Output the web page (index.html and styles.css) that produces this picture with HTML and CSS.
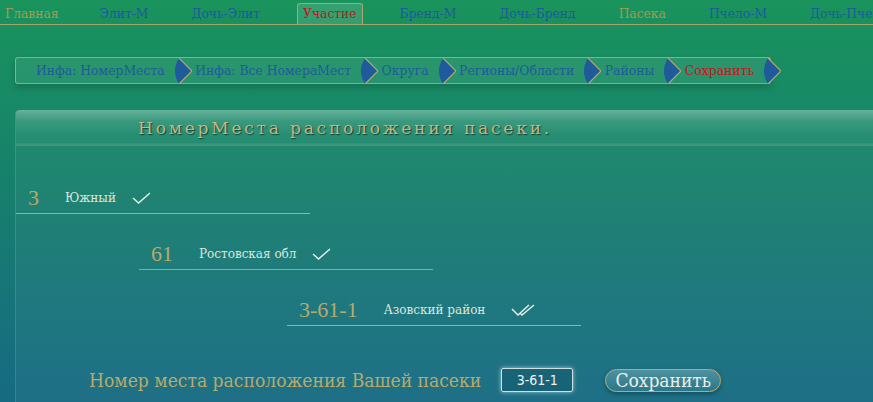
FILE: index.html
```html
<!DOCTYPE html>
<html lang="ru">
<head>
<meta charset="utf-8">
<title>НомерМеста</title>
<link rel="stylesheet" href="styles.css">
</head>
<body>
<nav class="topnav">
  <a class="nav-item tan first">Главная</a>
  <a class="nav-item">Элит-М</a>
  <a class="nav-item">Дочь-Элит</a>
  <a class="nav-item active">Участие</a>
  <a class="nav-item">Бренд-М</a>
  <a class="nav-item">Дочь-Бренд</a>
  <a class="nav-item tan">Пасека</a>
  <a class="nav-item">Пчело-М</a>
  <a class="nav-item">Дочь-Пчело</a>
</nav>

<div class="crumbs">
  <span class="crumb">Инфа: НомерМеста</span>
  <svg class="sep" viewBox="0 0 18 26" width="18" height="26"><path d="M5 0 L18 13 L5 26 Q-3 13 5 0 Z" fill="#1f5a9c"/><path d="M5 0 L18 13 L5 26" fill="none" stroke="#b9a86a" stroke-width="1.2"/></svg>
  <span class="crumb">Инфа: Все НомераМест</span>
  <svg class="sep" viewBox="0 0 18 26" width="18" height="26"><path d="M5 0 L18 13 L5 26 Q-3 13 5 0 Z" fill="#1f5a9c"/><path d="M5 0 L18 13 L5 26" fill="none" stroke="#b9a86a" stroke-width="1.2"/></svg>
  <span class="crumb">Округа</span>
  <svg class="sep" viewBox="0 0 18 26" width="18" height="26"><path d="M5 0 L18 13 L5 26 Q-3 13 5 0 Z" fill="#1f5a9c"/><path d="M5 0 L18 13 L5 26" fill="none" stroke="#b9a86a" stroke-width="1.2"/></svg>
  <span class="crumb">Регионы/Области</span>
  <svg class="sep" viewBox="0 0 18 26" width="18" height="26"><path d="M5 0 L18 13 L5 26 Q-3 13 5 0 Z" fill="#1f5a9c"/><path d="M5 0 L18 13 L5 26" fill="none" stroke="#b9a86a" stroke-width="1.2"/></svg>
  <span class="crumb">Районы</span>
  <svg class="sep" viewBox="0 0 18 26" width="18" height="26"><path d="M5 0 L18 13 L5 26 Q-3 13 5 0 Z" fill="#1f5a9c"/><path d="M5 0 L18 13 L5 26" fill="none" stroke="#b9a86a" stroke-width="1.2"/></svg>
  <span class="crumb red">Сохранить</span>
  <svg class="sep" viewBox="0 0 18 26" width="18" height="26"><path d="M5 0 L18 13 L5 26 Q-3 13 5 0 Z" fill="#1f5a9c"/><path d="M5 0 L18 13 L5 26" fill="none" stroke="#b9a86a" stroke-width="1.2"/></svg>
</div>

<section class="panel">
  <header class="panel-head">
    <h1 class="panel-title">НомерМеста расположения пасеки.</h1>
  </header>
  <div class="panel-body">
    <div class="pick r1">
      <span class="pick-num">3</span>
      <span class="pick-name">Южный</span>
      <svg class="tick" viewBox="0 0 19 12" width="19" height="12"><path d="M1 6 L6.5 11 L18 1" fill="none" stroke="#e8f0ea" stroke-width="1.4"/></svg>
    </div>
    <div class="pick r2">
      <span class="pick-num">61</span>
      <span class="pick-name">Ростовская обл</span>
      <svg class="tick" viewBox="0 0 19 12" width="19" height="12"><path d="M1 6 L6.5 11 L18 1" fill="none" stroke="#e8f0ea" stroke-width="1.4"/></svg>
    </div>
    <div class="pick r3">
      <span class="pick-num">3-61-1</span>
      <span class="pick-name">Азовский район</span>
      <svg class="tick" viewBox="0 0 25 12" width="25" height="12"><path d="M1 5 L7 11 L18 1 M9 9 L11 11 L23 1" fill="none" stroke="#e8f0ea" stroke-width="1.4"/></svg>
    </div>
    <div class="final">
      <span class="final-label">Номер места расположения Вашей пасеки</span>
      <span class="final-box">3-61-1</span>
      <button class="save-btn">Сохранить</button>
    </div>
  </div>
</section>
</body>
</html>
```

FILE: styles.css
```css
html, body {
  margin: 0;
  padding: 0;
}
body {
  width: 873px;
  height: 402px;
  overflow: hidden;
  font-family: "DejaVu Serif", serif;
  background: linear-gradient(180deg, #1a935c 0%, #178a66 25%, #177e6e 50%, #17747a 75%, #166a82 100%);
}

.topnav {
  display: flex;
  align-items: flex-end;
  gap: 31px;
  height: 24px;
  border-bottom: 1px solid #a3a46a;
  margin-left: -1px;
  white-space: nowrap;
  overflow: hidden;
}
.nav-item {
  display: block;
  flex: none;
  height: 20px;
  line-height: 21px;
  padding: 0 5px;
  border: 1px solid transparent;
  border-bottom: none;
  font-size: 12.3px;
  color: #1d5a9a;
}
.nav-item.first { margin-right: -2px; }
.nav-item.tan { color: #a39c52; }
.nav-item.active {
  color: #c0141c;
  border-color: #a9a86c;
  border-radius: 3px 3px 0 0;
  background: rgba(255,255,255,0.12);
}

.crumbs {
  display: flex;
  align-items: center;
  width: 734px;
  height: 25px;
  margin: 32px 0 0 15px;
  padding-left: 20px;
  border: 1px solid rgba(190,180,110,0.75);
  border-radius: 3px;
  background: rgba(255,255,255,0.07);
  box-shadow: 0 4px 7px rgba(0,0,0,0.18);
  white-space: nowrap;
}
.crumb {
  font-size: 12.4px;
  color: #1f5a9c;
}
.crumb.red { color: #c8141c; }
.sep {
  flex: none;
  margin: 0 3.5px 0 9px;
}

.panel {
  margin: 26px 0 0 15px;
  height: 300px;
  border-left: 1px solid rgba(255,255,255,0.12);
  border-radius: 4px 0 0 0;
  background: rgba(255,255,255,0.035);
}
.panel-head {
  height: 36px;
  border-radius: 4px 0 0 0;
  background: linear-gradient(180deg, rgba(255,255,255,0.32) 0%, rgba(255,255,255,0.12) 30%, rgba(255,255,255,0.03) 70%, rgba(255,255,255,0.03) 92%, rgba(255,255,255,0.12) 94%, rgba(255,255,255,0.12) 100%);
  display: flex;
  align-items: center;
  padding-left: 122px;
}
.panel-title {
  margin: 0;
  font-weight: normal;
  font-size: 17px;
  letter-spacing: 2.8px;
  color: #c4b584;
  text-shadow: 1px 1px 1px rgba(0,0,0,0.55);
  white-space: nowrap;
}

.panel-body {
  padding-top: 37px;
}
.pick {
  display: flex;
  align-items: center;
  width: 294px;
  height: 31px;
  padding-left: 12px;
  box-sizing: border-box;
  border-bottom: 1px solid rgba(210,225,210,0.6);
  white-space: nowrap;
}
.pick.r2 { margin: 25px 0 0 123px; border-bottom-color: rgba(200,190,140,0.7); }
.pick.r3 { margin: 25px 0 0 271px; }
.pick-num {
  font-family: "Liberation Serif", serif;
  font-size: 22px;
  color: #b8aa6c;
}
.pick-name {
  margin-left: 26px;
  font-size: 12px;
  color: #dce6df;
}
.tick {
  margin-left: 16px;
  flex: none;
}
.r3 .tick { margin-left: 26px; }

.final {
  display: flex;
  align-items: center;
  margin-top: 42px;
  padding-left: 73px;
  white-space: nowrap;
}
.final-label {
  font-family: "DejaVu Serif Condensed", "DejaVu Serif", serif;
  font-size: 19.1px;
  color: #b8aa6c;
}
.final-box {
  margin-left: 20px;
  width: 70px;
  height: 22px;
  line-height: 22px;
  text-align: center;
  font-family: "DejaVu Sans Condensed", "DejaVu Sans", sans-serif;
  font-size: 14px;
  color: #f0f4f0;
  border: 1px solid #cfe0e0;
  border-radius: 2px;
  background: rgba(0,40,60,0.18);
  box-shadow: 0 0 4px rgba(220,240,240,0.7);
}
.save-btn {
  margin-left: 32px;
  width: 116px;
  height: 23px;
  padding: 0;
  font-family: "DejaVu Serif Condensed", "DejaVu Serif", serif;
  font-size: 19px;
  line-height: 21px;
  color: #ecefe8;
  border: 1px solid #b8aa6c;
  border-radius: 12px;
  background: linear-gradient(180deg, rgba(255,255,255,0.22), rgba(255,255,255,0.05));
  box-shadow: 0 2px 4px rgba(0,0,0,0.3);
}
```
